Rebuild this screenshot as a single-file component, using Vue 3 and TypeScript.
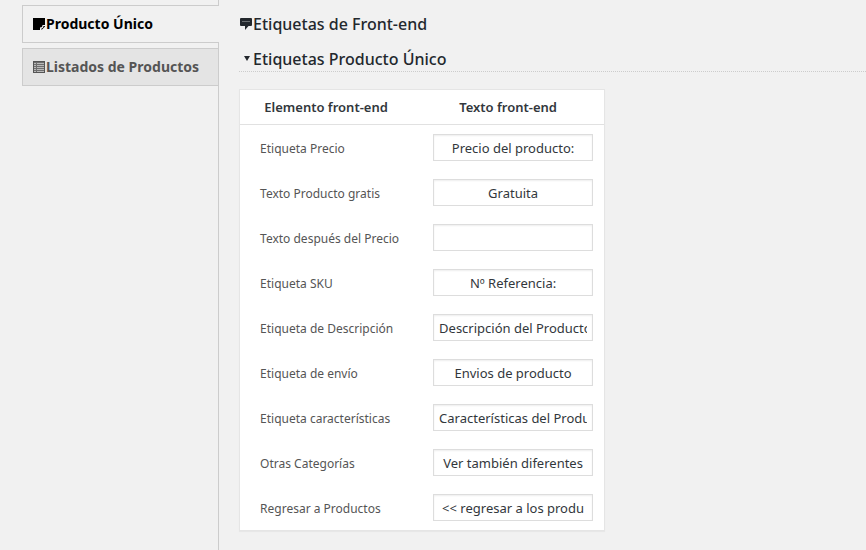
<script setup lang="ts">
import { ref } from 'vue'

interface LabelField {
  id: string
  label: string
  value: string
}

const fields = ref<LabelField[]>([
  { id: 'price', label: 'Etiqueta Precio', value: 'Precio del producto:' },
  { id: 'free', label: 'Texto Producto gratis', value: 'Gratuita' },
  { id: 'after-price', label: 'Texto después del Precio', value: '' },
  { id: 'sku', label: 'Etiqueta SKU', value: 'Nº Referencia:' },
  { id: 'description', label: 'Etiqueta de Descripción', value: 'Descripción del Producto' },
  { id: 'shipping', label: 'Etiqueta de envío', value: 'Envios de producto' },
  { id: 'features', label: 'Etiqueta características', value: 'Características del Producto' },
  { id: 'categories', label: 'Otras Categorías', value: 'Ver también diferentes' },
  { id: 'back', label: 'Regresar a Productos', value: '<< regresar a los produ' },
])
</script>

<template>
  <div class="page">
    <nav class="sidebar">
      <a href="#producto" class="tab active">
        <svg class="tab-icon" viewBox="0 0 13 13" aria-hidden="true">
          <path fill="currentColor" d="M0 0h12v7H9.500Q9.500 9.500 7 9.500V12H0z" />
          <path fill="currentColor" d="M12 8v.5L8.500 12V10.500Q10.500 10 10.500 8z" />
        </svg>
        <span>Producto Único</span>
      </a>
      <a href="#listados" class="tab">
        <svg class="tab-icon" viewBox="0 0 13 13" aria-hidden="true">
          <path
            fill="currentColor"
            fill-rule="evenodd"
            d="M0 0h12v12H0zM1 1v10h10V1z"
          />
          <path fill="currentColor" opacity="0.75" d="M1 1h10v1H1zM1 3h10v1H1zM1 5h10v1H1zM1 7h10v1H1zM1 9h10v1H1zM3 1h1v10H3z" />
          <path fill="currentColor" opacity="0.3" d="M1 1h10v10H1z" />
        </svg>
        <span>Listados de Productos</span>
      </a>
    </nav>

    <main class="content">
      <h2 class="title">
        <svg class="title-icon" viewBox="0 0 14 14" aria-hidden="true">
          <path
            fill="currentColor"
            d="M2 1h10q1 0 1 1v6q0 1-1 1H9.500L6 13V9H2Q1 9 1 8V2q0-1 1-1z"
          />
          <path fill="#f1f1f1" opacity="0.35" d="M3 4h8v1H3z" />
        </svg>
        <span>Etiquetas de Front-end</span>
      </h2>
      <h2 class="title section">
        <svg class="title-icon" viewBox="0 0 14 14" aria-hidden="true">
          <path fill="currentColor" d="M5 4h6L8 9z" />
        </svg>
        <span>Etiquetas Producto Único</span>
      </h2>

      <table class="labels">
        <thead>
          <tr>
            <th scope="col">Elemento front-end</th>
            <th scope="col">Texto front-end</th>
          </tr>
        </thead>
        <tbody>
          <tr v-for="field in fields" :key="field.id">
            <td class="name"><label :for="field.id">{{ field.label }}</label></td>
            <td class="value"><input :id="field.id" v-model="field.value" type="text" /></td>
          </tr>
        </tbody>
      </table>
    </main>
  </div>
</template>

<style>
body {
  margin: 0;
  background: #f1f1f1;
}
</style>

<style scoped>
.page {
  display: flex;
  min-height: 100vh;
  font-family: "Segoe UI", "Noto Sans", "Open Sans", sans-serif;
  font-size: 13px;
  color: #444;
}

.sidebar {
  flex: none;
  display: flex;
  flex-direction: column;
  gap: 5px;
  padding: 5px 0 0 22px;
  border-right: 1px solid #ccc;
}

.tab {
  display: flex;
  align-items: center;
  padding: 6px 19px 6px 10px;
  border: 1px solid #ccc;
  border-right: 0;
  background: #e4e4e4;
  color: #555;
  font-size: 14px;
  font-weight: 700;
  line-height: 24px;
  white-space: nowrap;
  text-decoration: none;
}

.tab.active {
  margin-right: -1px;
  background: #f1f1f1;
  color: #000;
}

.tab-icon {
  flex: none;
  width: 13px;
  height: 13px;
}

.content {
  flex: 1;
  min-width: 0;
  padding: 12px 0 18px 20px;
}

.title {
  display: flex;
  align-items: center;
  margin: 0;
  color: #23282d;
  font-size: 16px;
  font-weight: 500;
  line-height: 24px;
}

.title-icon {
  flex: none;
  width: 14px;
  height: 14px;
}

.section {
  margin: 11px 0 17px;
  border-bottom: 1px dotted #ccc;
}

.labels {
  border: 1px solid #e5e5e5;
  border-spacing: 0;
  background: #fff;
  box-shadow: 0 1px 1px rgba(0, 0, 0, 0.04);
}

th {
  padding: 7px 10px;
  border-bottom: 1px solid #e1e1e1;
  color: #32373c;
  font-size: 13px;
  font-weight: 600;
  line-height: 20px;
  text-align: center;
}

td {
  box-sizing: border-box;
  height: 45px;
  padding: 0;
}

.name {
  min-width: 172px;
  padding: 2px 10px 0 20px;
  color: #555;
  font-size: 12px;
}

.value {
  padding: 0 11px 0 21px;
}

input {
  display: block;
  box-sizing: border-box;
  width: 160px;
  height: 27px;
  margin: 0;
  padding: 0 5px;
  border: 1px solid #ddd;
  border-radius: 0;
  background: #fff;
  box-shadow: inset 0 1px 2px rgba(0, 0, 0, 0.07);
  color: #32373c;
  font-family: inherit;
  font-size: 13px;
  text-align: center;
}
</style>
